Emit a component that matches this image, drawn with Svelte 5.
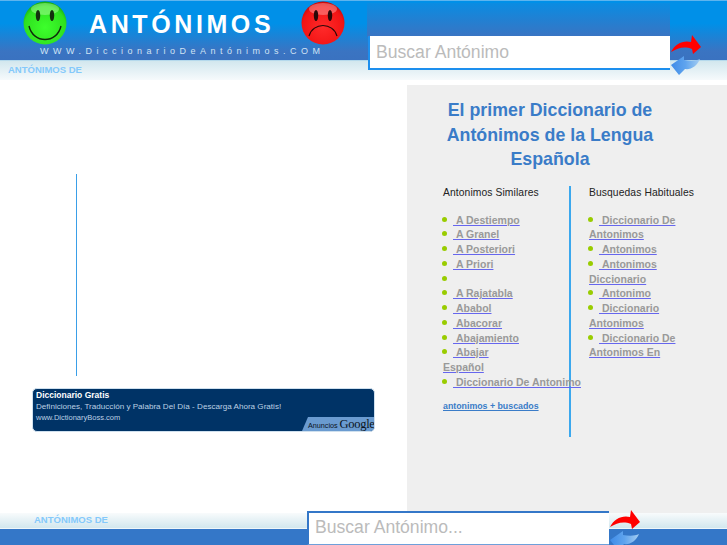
<script lang="ts">
  const similares = [
    ['A Destiempo'], ['A Granel'], ['A Posteriori'], ['A Priori'], [''], ['A Rajatabla'],
    ['Ababol'], ['Abacorar'], ['Abajamiento'], ['Abajar', 'Español'], ['Diccionario De Antonimo'],
  ];
  const habituales = [
    ['Diccionario De', 'Antonimos'], ['Antonimos'], ['Antonimos', 'Diccionario'],
    ['Antonimo'], ['Diccionario', 'Antonimos'], ['Diccionario De', 'Antonimos En'],
  ];
</script>

{#snippet arrows(id: string)}
  <svg class="arrows" width="32" height="40" viewBox="0 0 32 40">
    <defs>
      <linearGradient id={id}>
        <stop offset="0" stop-color="#3f8ce8" /><stop offset="0.5" stop-color="#5fa4ee" /><stop offset="1" stop-color="#a4cdf2" />
      </linearGradient>
    </defs>
    <path d="M1 17C5 9 13 5 21 7L22 0L31 12L23 19L22 14C14 11 8 13 1 17Z" fill="#f00" />
    <path d="M1 30L14 21L14 25C20 26 26 26 30 24C27 31 21 35 15 34L9 40Z" fill="url(#{id})" />
  </svg>
{/snippet}

{#snippet linkList(items: string[][])}
  <ul>
    {#each items as parts}
      <li>
        <i></i>{#if parts[0]}<a href="#a">&nbsp;{parts[0]}</a>{/if}
        {#if parts[1]}<br /><a href="#a">{parts[1]}</a>{/if}
      </li>
    {/each}
  </ul>
{/snippet}

<div class="page">
  <header>
    <div class="bar">
      <div class="brand">
        <div class="logo-row">
          <svg width="46" height="46" viewBox="0 0 46 46">
            <defs>
              <radialGradient id="g" cx="0.5" cy="0.6" r="0.6">
                <stop offset="0" stop-color="#3dff2c" /><stop offset="0.8" stop-color="#2fe01f" /><stop offset="1" stop-color="#14a810" />
              </radialGradient>
              <radialGradient id="r" cx="0.5" cy="0.6" r="0.6">
                <stop offset="0" stop-color="#ff2a2a" /><stop offset="0.8" stop-color="#f21414" /><stop offset="1" stop-color="#c40808" />
              </radialGradient>
            </defs>
            <circle cx="23" cy="23" r="21.5" fill="url(#g)" />
            <ellipse cx="23" cy="9" rx="14" ry="6" fill="#b5ffa8" opacity="0.45" />
            <ellipse cx="16" cy="15.5" rx="2.2" ry="5.5" fill="#14300e" />
            <ellipse cx="30" cy="15.5" rx="2.2" ry="5.5" fill="#14300e" />
            <path d="M7 26C11 44 35 44 39 26" fill="none" stroke="#0f2a0a" stroke-width="1.4" />
          </svg>
          <h1>ANTÓNIMOS</h1>
          <svg class="sad" width="46" height="46" viewBox="0 0 46 46">
            <circle cx="23" cy="23" r="21.5" fill="url(#r)" />
            <ellipse cx="23" cy="9" rx="14" ry="6" fill="#ffb0b0" opacity="0.45" />
            <ellipse cx="16" cy="15.5" rx="2.2" ry="5.5" fill="#2a0808" />
            <ellipse cx="30" cy="15.5" rx="2.2" ry="5.5" fill="#2a0808" />
            <path d="M9 36C13 22 33 22 37 36" fill="none" stroke="#2a0808" stroke-width="1.2" />
          </svg>
        </div>
        <div class="url">WWW.DiccionarioDeAntónimos.COM</div>
      </div>
      <div class="shade"></div>
    </div>
    <div class="strip"><span>ANTÓNIMOS DE</span></div>
    <div class="search top">
      <input placeholder="Buscar Antónimo" />
      {@render arrows('blue-top')}
    </div>
  </header>

  <main>
    <section class="left">
      <div class="slot"></div>
      <div class="ad">
        <b>Diccionario Gratis</b>
        <span>Definiciones, Traducción y Palabra Del Día - Descarga Ahora Gratis!</span>
        <small>www.DictionaryBoss.com</small>
        <div class="adtag">Anuncios <em>Google</em></div>
      </div>
    </section>
    <aside>
      <h2>El primer Diccionario de Antónimos de la Lengua Española</h2>
      <div class="cols">
        <div class="col first">
          <h3>Antonimos Similares</h3>
          {@render linkList(similares)}
          <a class="more" href="#m">antonimos + buscados</a>
        </div>
        <div class="col second">
          <h3>Busquedas Habituales</h3>
          {@render linkList(habituales)}
        </div>
      </div>
    </aside>
  </main>

  <footer>
    <div class="strip2"><span>ANTÓNIMOS DE</span></div>
    <div class="blue"></div>
    <div class="search bottom">
      <input placeholder="Buscar Antónimo..." />
      {@render arrows('blue-bottom')}
    </div>
  </footer>
</div>

<style>
  :global(body) {
    background: #fff;
  }
  .page {
    width: 727px;
    height: 545px;
    overflow: hidden;
    display: flex;
    flex-direction: column;
    font-family: "Liberation Sans", Arial, sans-serif;
  }
  header {
    position: relative;
    flex: none;
  }
  .bar {
    height: 59px;
    border-top: 1px solid #5db4ee;
    background: linear-gradient(#0090e8 0, #0090e8 38%, #3a74c2 85%, #3a72c0 100%);
    border-bottom: 1px solid #b5d9ec;
    position: relative;
  }
  .shade {
    position: absolute;
    left: 367px;
    top: 2px;
    width: 303px;
    height: 34px;
    background: linear-gradient(#0a8ce2, #3a74c2);
  }
  .brand {
    padding: 0 0 0 22px;
  }
  .logo-row {
    display: flex;
    align-items: center;
    height: 44px;
  }
  h1 {
    margin: 1px 0 0 21px;
    color: #fff;
    font-size: 25px;
    font-weight: bold;
    letter-spacing: 3.6px;
    line-height: 44px;
    width: 191px;
  }
  .sad {
    margin-left: 20px;
  }
  .url {
    margin: 1px 0 0 18px;
    color: #cfe3f5;
    font-size: 9px;
    letter-spacing: 4.5px;
    line-height: 10px;
    white-space: nowrap;
  }
  .strip {
    height: 19px;
    background: linear-gradient(#d2e7ee, #f6fafc);
    padding-left: 8px;
  }
  .strip span, .strip2 span {
    color: #84c9fb;
    font-size: 9.5px;
    font-weight: bold;
    line-height: 17px;
    display: block;
  }
  .search {
    position: absolute;
    display: flex;
    align-items: flex-start;
  }
  .search input {
    box-sizing: border-box;
    width: 302px;
    background: #fff;
    font-family: inherit;
    outline: none;
    color: #bbb;
    font-size: 17.6px;
    padding: 0 0 0 6px;
    border: 0;
  }
  .search input::placeholder {
    color: #bbb;
    opacity: 1;
  }
  .search.top {
    left: 368px;
    top: 36px;
  }
  .top input {
    height: 34px;
    border-left: 2px solid #1d8fee;
    border-bottom: 2px solid #1d8fee;
  }
  .top .arrows {
    margin-top: -1px;
  }
  .search.bottom {
    left: 307px;
    bottom: 0;
    height: 34px;
  }
  .bottom input {
    height: 34px;
    border-left: 2px solid #3477c8;
    border-top: 2px solid #3477c8;
    border-bottom: 1px solid #6ea0da;
    padding-bottom: 2px;
  }
  .arrows {
    flex: none;
  }
  .bottom .arrows {
    margin-top: -1px;
  }
  main {
    flex: 1;
    display: flex;
    min-height: 0;
    padding-top: 5px;
  }
  .left {
    width: 407px;
    flex: none;
    box-sizing: border-box;
    padding: 89px 0 0 32px;
  }
  .slot {
    margin-left: 44px;
    height: 202px;
    border-left: 1px solid #3a9fe8;
    margin-bottom: 12px;
  }
  .ad {
    position: relative;
    box-sizing: border-box;
    width: 343px;
    height: 44px;
    background: #003366;
    border-radius: 5px;
    padding: 1px 3px;
    display: flex;
    flex-direction: column;
    overflow: hidden;
    border: 1px solid #cfe0ee;
  }
  .ad b {
    color: #fff;
    font-size: 8.5px;
    line-height: 11px;
  }
  .ad span {
    color: #bcd0e4;
    font-size: 8.1px;
    line-height: 12px;
  }
  .ad small {
    color: #bcd0e4;
    font-size: 7.5px;
    line-height: 10px;
  }
  .adtag {
    position: absolute;
    right: 0;
    bottom: 0;
    width: 72px;
    height: 14px;
    background: #6a9bd0;
    clip-path: polygon(6px 0, 100% 0, 100% 100%, 0 100%);
    color: #0a1422;
    font-size: 7.2px;
    line-height: 14px;
    padding-left: 6px;
    box-sizing: border-box;
    white-space: nowrap;
  }
  .adtag em {
    font-family: "Liberation Serif", serif;
    font-style: normal;
    font-size: 12.5px;
    letter-spacing: -0.3px;
  }
  aside {
    flex: 1;
    background: #efefef;
    min-width: 0;
  }
  h2 {
    box-sizing: border-box;
    width: 286px;
    margin: 13px 0 0;
    padding: 0 30px;
    text-align: center;
    color: #3a7cc8;
    font-size: 17.8px;
    line-height: 24.5px;
    font-weight: bold;
  }
  .cols {
    display: flex;
    margin-top: 14px;
  }
  .col {
    box-sizing: border-box;
    height: 251px;
  }
  .first {
    width: 164px;
    padding-left: 36px;
    border-right: 2px solid #3ba8ee;
    white-space: nowrap;
  }
  .second {
    flex: 1;
    padding-left: 18px;
  }
  h3 {
    margin: 0 0 13px;
    font-size: 10.3px;
    line-height: 14px;
    font-weight: normal;
    color: #222;
    letter-spacing: 0.1px;
    white-space: nowrap;
  }
  ul {
    margin: 0;
    padding: 0;
    list-style: none;
    font-size: 10.5px;
    line-height: 14.75px;
  }
  li i {
    display: inline-block;
    width: 5px;
    height: 5px;
    border-radius: 50%;
    background: #99cc00;
    margin: 0 6px 0 -1px;
    vertical-align: 2px;
  }
  ul a {
    color: #999;
    font-weight: bold;
    text-decoration: underline;
    text-decoration-color: #6666ee;
  }
  .more {
    display: block;
    margin-top: 11px;
    color: #3a7cc8;
    font-size: 8.8px;
    font-weight: bold;
  }
  footer {
    position: relative;
    flex: none;
  }
  .strip2 {
    height: 15px;
    background: linear-gradient(#f8fbfc, #d2e7ee);
    padding-left: 34px;
    border-bottom: 1px solid #eef6fa;
  }
  .strip2 span {
    line-height: 13px;
  }
  .blue {
    height: 16px;
    background: #3477c8;
  }
</style>
